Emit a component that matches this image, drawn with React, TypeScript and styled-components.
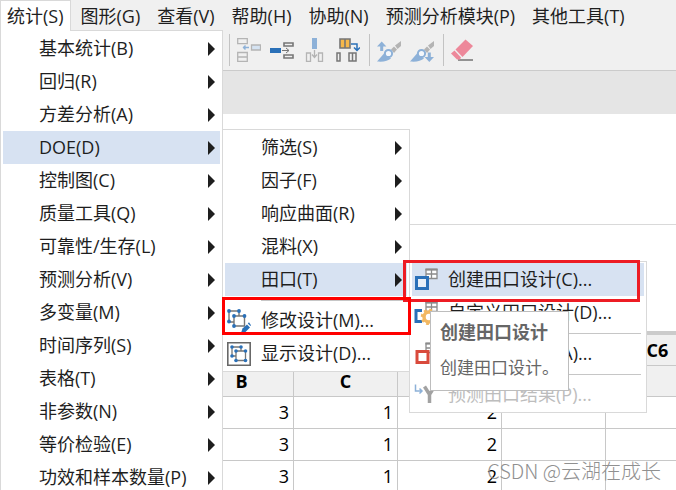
import React from "react";
import styled, { createGlobalStyle, css } from "styled-components";

const blue = "#2a70b8";
const paleBlue = "#8db1d8";
const grey = "#767676";
const paleGrey = "#b4b4b4";

const GlobalStyle = createGlobalStyle`
  *, *::before, *::after { box-sizing: border-box; }
  html, body, #root { height: 100%; }
  body {
    margin: 0;
    overflow: hidden;
    background: #fff;
    color: #1e1e1e;
    font-family: "Open Sans", "Noto Sans CJK SC", sans-serif;
    font-size: 18px;
  }
  button { font: inherit; color: inherit; }
`;

const Page = styled.div`
  position: relative;
  display: flex;
  flex-direction: column;
  height: 100%;
  overflow: hidden;
`;

const MenuBar = styled.nav`
  position: relative;
  z-index: 3;
  display: flex;
  gap: 3px;
  height: 30px;
  background: #f0f0f0;
`;

const MenuBarButton = styled.button<{ $open?: boolean }>`
  position: relative;
  z-index: 5;
  height: 31px;
  padding: 0 6px;
  border: 1px solid transparent;
  border-bottom: 0;
  background: transparent;
  line-height: 29px;
  white-space: nowrap;
  ${(p) => p.$open && css`
    background: #fff;
    border-color: #d9d9d9;
  `}
`;

const Toolbar = styled.div`
  display: flex;
  align-items: center;
  height: 41px;
  padding-left: 229px;
  background: #f0f0f0;
  border-bottom: 1px solid #cbcbcb;
`;

const ToolGroup = styled.div`
  display: flex;
  align-items: center;
  gap: 9px;
  height: 32px;
  padding: 0 9px 0 7px;
  border-left: 1px solid #c3c3c3;
`;

const ToolButton = styled.button`
  display: flex;
  padding: 0;
  border: 0;
  background: transparent;
`;

const Band = styled.div`
  height: 43px;
  flex: none;
  background: #e5e5e5;
`;

const OutputPane = styled.div`
  height: 111px;
  flex: none;
  border-bottom: 1px solid #d9d9d9;
`;

const WorksheetPane = styled.div`
  flex: 1;
  padding-top: 106px;
  overflow: hidden;
`;

const Sheet = styled.table`
  width: max-content;
  table-layout: fixed;
  border-collapse: separate;
  border-spacing: 0;
  border-top: 4px solid #cbcbcb;
  color: #000;
`;

const HeadCell = styled.th`
  width: 104px;
  height: 31px;
  padding: 0;
  border-right: 1px solid #c8c8c8;
  border-bottom: 1px solid #c8c8c8;
  background: #f0f0f0;
  font-weight: 700;
  line-height: 30px;

  &:first-child { width: 86px; }
`;

const Cell = styled.td`
  height: 32px;
  padding: 0 4px;
  border-right: 1px solid #c8c8c8;
  border-bottom: 1px solid #c8c8c8;
  text-align: right;
  line-height: 31px;
`;

const Menu = styled.ul<{ $level: "root" | "side" | "inner" }>`
  position: absolute;
  z-index: 4;
  margin: 0;
  padding: 1px 2px;
  list-style: none;
  background: #fff;
  border: 1px solid #d9d9d9;
  ${(p) => p.$level === "root" && css`top: 30px; left: 0; width: 223px;`}
  ${(p) => p.$level === "side" && css`top: -2px; left: 219px; width: 188px;`}
  ${(p) => p.$level === "inner" && css`top: -2px; left: 184px; width: 238px;`}
`;

const MenuItem = styled.li`
  position: relative;
`;

const MenuButton = styled.button<{ $active?: boolean }>`
  display: grid;
  grid-template-columns: 34px 1fr 7px;
  align-items: center;
  width: 100%;
  height: 33px;
  padding: 0 5px 0 2px;
  border: 0;
  background: ${(p) => (p.$active ? "#d7e2f2" : "transparent")};
  text-align: left;
  line-height: 33px;
  white-space: nowrap;

  &:disabled { color: #bdbdbd; }
`;

const IconSlot = styled.span`
  display: flex;
`;

const Divider = styled.li`
  height: 8px;
  padding: 4px 3px 0 36px;

  &::before {
    content: "";
    display: block;
    height: 1px;
    background: #c6c6c6;
  }
`;

const Tooltip = styled.div`
  position: absolute;
  z-index: 6;
  top: 48px;
  left: 18px;
  width: 139px;
  padding: 4px 9px 6px;
  background: #fff;
  border: 1px solid #bdbdbd;
  color: #666;
  white-space: nowrap;
`;

const TooltipTitle = styled.strong`
  display: block;
  line-height: 33px;
`;

const TooltipText = styled.p`
  margin: 0;
  padding-top: 3px;
  font-size: 17px;
  line-height: 32px;
`;

const Marker = styled.div<{ $kind: "create" | "modify" }>`
  position: absolute;
  z-index: 5;
  pointer-events: none;
  ${(p) => p.$kind === "create"
    ? css`top: -3px; left: -9px; width: 237px; height: 42px; border: 3px solid #ed1c24;`
    : css`top: -7px; left: -3px; width: 189px; height: 38px; border: 3px solid #f00;`}
`;

const Watermark = styled.div`
  position: absolute;
  z-index: 2;
  right: 15px;
  bottom: 5px;
  color: #909090;
  font-family: "Noto Sans CJK SC", sans-serif;
  font-size: 20px;
  font-weight: 300;
  line-height: 28px;
`;

const Arrow = () => (
  <svg width="7" height="14" viewBox="0 0 7 14" aria-hidden="true">
    <path d="M0 0L7 7L0 14Z" fill="#1e1e1e" />
  </svg>
);

const Icon = ({ children }: { children: React.ReactNode }) => (
  <svg width="24" height="24" viewBox="0 0 24 24" fill="none" aria-hidden="true">{children}</svg>
);

const InsertCellsIcon = () => (
  <Icon>
    <g stroke={paleGrey} strokeWidth="1.300">
      <path d="M.7 .7h9.600v5H.7zM.7 14.500h9.600v8.800H.7zM.7 19h9.600" />
      <path d="M14.500 7h9v5h-9z" fill="#d5e3f2" />
    </g>
    <path d="M6 9.500h6M8.500 7.500L6.500 9.500L8.500 11.500" stroke={paleBlue} strokeWidth="1.400" />
  </Icon>
);

const InsertRowsIcon = () => (
  <Icon>
    <path d="M0 10h11v5H0z" fill={blue} />
    <path d="M12 12.500h7M16 10l3 2.500L16 15" stroke={grey} />
    <path d="M14 5h9v3h-9zM14 17h9v3h-9z" stroke={grey} strokeWidth="1.600" />
  </Icon>
);

const InsertColumnsIcon = () => (
  <Icon>
    <path d="M9 0h5v11H9z" fill={paleBlue} />
    <path d="M11.500 12v7M9 16.500l2.500 3l2.500-3M3.500 15h4v8.500h-4zM15.500 15h4v8.500h-4z" stroke={paleGrey} strokeWidth="1.300" />
  </Icon>
);

const MoveColumnsIcon = () => (
  <Icon>
    <path d="M4 1h10v9H4z" fill="#f6b84b" />
    <path d="M4 1h10v9H4zM9 1v9" stroke={grey} strokeWidth="1.600" />
    <path d="M15 6h6v6M18 9.500l3 3l3-3" stroke={blue} strokeWidth="1.500" />
    <path d="M1 15h3v8H1zM13 15h7v8h-7zM16.500 15v8" stroke={grey} strokeWidth="1.500" />
  </Icon>
);

const BrushShape = () => (
  <>
    <path d="M24 3L18 7.500L20.500 11L24 8z" fill={paleGrey} />
    <path d="M17 8.500l3 3l-3 3.500l-3-3.500z" fill={paleGrey} />
    <path d="M0 23.500L7 15.500L14 20.500C11 23 7 24 0 23.500Z" fill={paleBlue} />
    <circle cx="11.500" cy="15.500" r="3.600" stroke={paleBlue} strokeWidth="2" fill="#f4f7fb" />
  </>
);

const BrushUpIcon = () => (
  <Icon>
    <BrushShape />
    <path d="M3.200 13V8.500H0L4.700 3.500L9.400 8.500H6.200V13z" fill={paleBlue} />
  </Icon>
);

const BrushDownIcon = () => (
  <Icon>
    <BrushShape />
    <path d="M17.800 14.500V19H14.600L19.300 24L24 19H20.800V14.500z" fill={paleBlue} />
  </Icon>
);

const EraserIcon = () => (
  <Icon>
    <path d="M7 22h15" stroke="#929292" strokeWidth="2" />
    <path d="M14.500 1.500L22 8L11.500 19L4.500 11.500Z" fill="#ed889a" />
    <path d="M3.500 12.500L10 19.500L9 21.500H6L0 15.500Z" fill="#ed889a" />
  </Icon>
);

const ModifyDesignIcon = () => (
  <Icon>
    <path d="M7 13H2V2h10v5M7 7h10.500v10H7z" stroke={grey} strokeWidth="1.400" />
    <g fill={blue}>
      <circle cx="2" cy="2" r="1.900" /><circle cx="12" cy="2" r="1.900" />
      <circle cx="2" cy="12.500" r="1.900" /><circle cx="7" cy="7" r="1.900" />
      <circle cx="17.500" cy="7" r="1.900" /><circle cx="7" cy="17" r="1.900" />
    </g>
    <path d="M14 24l1.500-4.500l4.500-4l3 3l-4.500 4.500Z" fill={blue} />
    <path d="M20.800 14.500l1.200-1.200l2 3l-.6.800Z" fill={blue} />
  </Icon>
);

const ShowDesignIcon = () => (
  <Icon>
    <path d="M.8 .8h22.400v22.400H.8z" stroke="#686868" strokeWidth="1.600" />
    <path d="M9 14H5V5h9v4M9 9h9.500v9.500H9z" stroke={grey} strokeWidth="1.300" />
    <g fill={blue}>
      <circle cx="5" cy="5" r="1.800" /><circle cx="14" cy="5" r="1.800" />
      <circle cx="5" cy="14" r="1.800" /><circle cx="9" cy="9" r="1.800" />
      <circle cx="18.500" cy="9" r="1.800" /><circle cx="9" cy="18.500" r="1.800" />
      <circle cx="18.500" cy="18.500" r="1.800" />
    </g>
  </Icon>
);

const TableShape = () => (
  <>
    <path d="M12 1.500h11v9H12z" fill="#fff" />
    <path d="M12 1.500h11v9H12zM12 6h11M17.500 2v8.500" stroke="#8b8b8b" strokeWidth="1.300" />
    <path d="M11.500 1.500h12" stroke="#8b8b8b" strokeWidth="2" />
  </>
);

const CreateIcon = () => (
  <Icon>
    <TableShape />
    <path d="M2.500 9.500h11v11h-11z" fill="#e9f0f8" stroke={blue} strokeWidth="3" />
  </Icon>
);

const CustomIcon = () => (
  <Icon>
    <TableShape />
    <path d="M8 9.500H2v11h6" stroke={blue} strokeWidth="3" />
    <circle cx="15" cy="16" r="5" fill="#fff" stroke="#f2b862" strokeWidth="3.500" />
    <circle cx="15" cy="16" r="7" stroke="#f2b862" strokeWidth="2.500" strokeDasharray="2.800 2.700" />
  </Icon>
);

const AnalyzeIcon = () => (
  <Icon>
    <TableShape />
    <path d="M3 9.500h11v11H3z" fill="#fff" stroke="#d94a3c" strokeWidth="3" />
  </Icon>
);

const PredictIcon = () => (
  <Icon>
    <path d="M1.500 1.500v6.500H8M5.500 5.500L8 8L5.500 10.500" stroke={paleBlue} strokeWidth="1.500" />
    <path d="M10.500 3.500l5 8l5-8M15.500 11v9" stroke="#a2a2a2" strokeWidth="3.500" />
  </Icon>
);

interface EntryProps {
  label: string;
  icon?: React.ReactNode;
  submenu?: boolean;
  active?: boolean;
  disabled?: boolean;
  children?: React.ReactNode;
}

const Entry = ({ label, icon, submenu, active, disabled, children }: EntryProps) => (
  <MenuItem>
    <MenuButton type="button" $active={active} disabled={disabled} aria-haspopup={submenu ? "menu" : undefined}>
      <IconSlot>{icon}</IconSlot>
      <span>{label}</span>
      {submenu && <Arrow />}
    </MenuButton>
    {children}
  </MenuItem>
);

const TaguchiMenu = () => (
  <Menu $level="inner">
    <Entry label="创建田口设计(C)..." icon={<CreateIcon />} active>
      <Marker $kind="create" />
      <Tooltip role="tooltip">
        <TooltipTitle>创建田口设计</TooltipTitle>
        <TooltipText>创建田口设计。</TooltipText>
      </Tooltip>
    </Entry>
    <Entry label="自定义田口设计(D)..." icon={<CustomIcon />} />
    <Divider />
    <Entry label="分析田口设计(A)..." icon={<AnalyzeIcon />} />
    <Divider />
    <Entry label="预测田口结果(P)..." icon={<PredictIcon />} disabled />
  </Menu>
);

const DoeMenu = () => (
  <Menu $level="side">
    {["筛选(S)", "因子(F)", "响应曲面(R)", "混料(X)"].map((label) => (
      <Entry key={label} label={label} submenu />
    ))}
    <Entry label="田口(T)" submenu active>
      <TaguchiMenu />
    </Entry>
    <Divider />
    <Entry label="修改设计(M)..." icon={<ModifyDesignIcon />}>
      <Marker $kind="modify" />
    </Entry>
    <Entry label="显示设计(D)..." icon={<ShowDesignIcon />} />
  </Menu>
);

const statMenu = [
  "基本统计(B)", "回归(R)", "方差分析(A)", "DOE(D)", "控制图(C)", "质量工具(Q)", "可靠性/生存(L)",
  "预测分析(V)", "多变量(M)", "时间序列(S)", "表格(T)", "非参数(N)", "等价检验(E)", "功效和样本数量(P)",
];

const menuBar = ["统计(S)", "图形(G)", "查看(V)", "帮助(H)", "协助(N)", "预测分析模块(P)", "其他工具(T)"];

const toolGroups = [
  [
    { name: "插入单元格", icon: <InsertCellsIcon /> },
    { name: "插入行", icon: <InsertRowsIcon /> },
    { name: "插入列", icon: <InsertColumnsIcon /> },
    { name: "移动列", icon: <MoveColumnsIcon /> },
  ],
  [
    { name: "上一个刷亮", icon: <BrushUpIcon /> },
    { name: "下一个刷亮", icon: <BrushDownIcon /> },
  ],
  [{ name: "清除", icon: <EraserIcon /> }],
];

const columns = ["", "", "", "", "", "C6"];
const names = ["", "B", "C", "", "", ""];
const rows = [
  ["", "3", "1", "2", "", ""],
  ["", "3", "1", "2", "", ""],
  ["", "3", "1", "2", "", ""],
];

export default function App() {
  return (
    <Page>
      <GlobalStyle />
      <MenuBar>
        {menuBar.map((label, i) => (
          <MenuBarButton key={label} type="button" $open={i === 0}>{label}</MenuBarButton>
        ))}
        <Menu $level="root">
          {statMenu.map((label) => (
            <Entry key={label} label={label} submenu active={label === "DOE(D)"}>
              {label === "DOE(D)" && <DoeMenu />}
            </Entry>
          ))}
        </Menu>
      </MenuBar>
      <Toolbar>
        {toolGroups.map((group, i) => (
          <ToolGroup key={i}>
            {group.map((tool) => (
              <ToolButton key={tool.name} type="button" aria-label={tool.name}>{tool.icon}</ToolButton>
            ))}
          </ToolGroup>
        ))}
      </Toolbar>
      <Band />
      <OutputPane />
      <WorksheetPane>
        <Sheet>
          <thead>
            <tr>
              <HeadCell />
              {columns.map((c, i) => <HeadCell key={i} scope="col">{c}</HeadCell>)}
            </tr>
            <tr>
              <HeadCell />
              {names.map((n, i) => <HeadCell key={i} scope="col">{n}</HeadCell>)}
            </tr>
          </thead>
          <tbody>
            {rows.map((row, r) => (
              <tr key={r}>
                <Cell />
                {row.map((v, c) => <Cell key={c}>{v}</Cell>)}
              </tr>
            ))}
          </tbody>
        </Sheet>
      </WorksheetPane>
      <Watermark>CSDN @云湖在成长</Watermark>
    </Page>
  );
}
